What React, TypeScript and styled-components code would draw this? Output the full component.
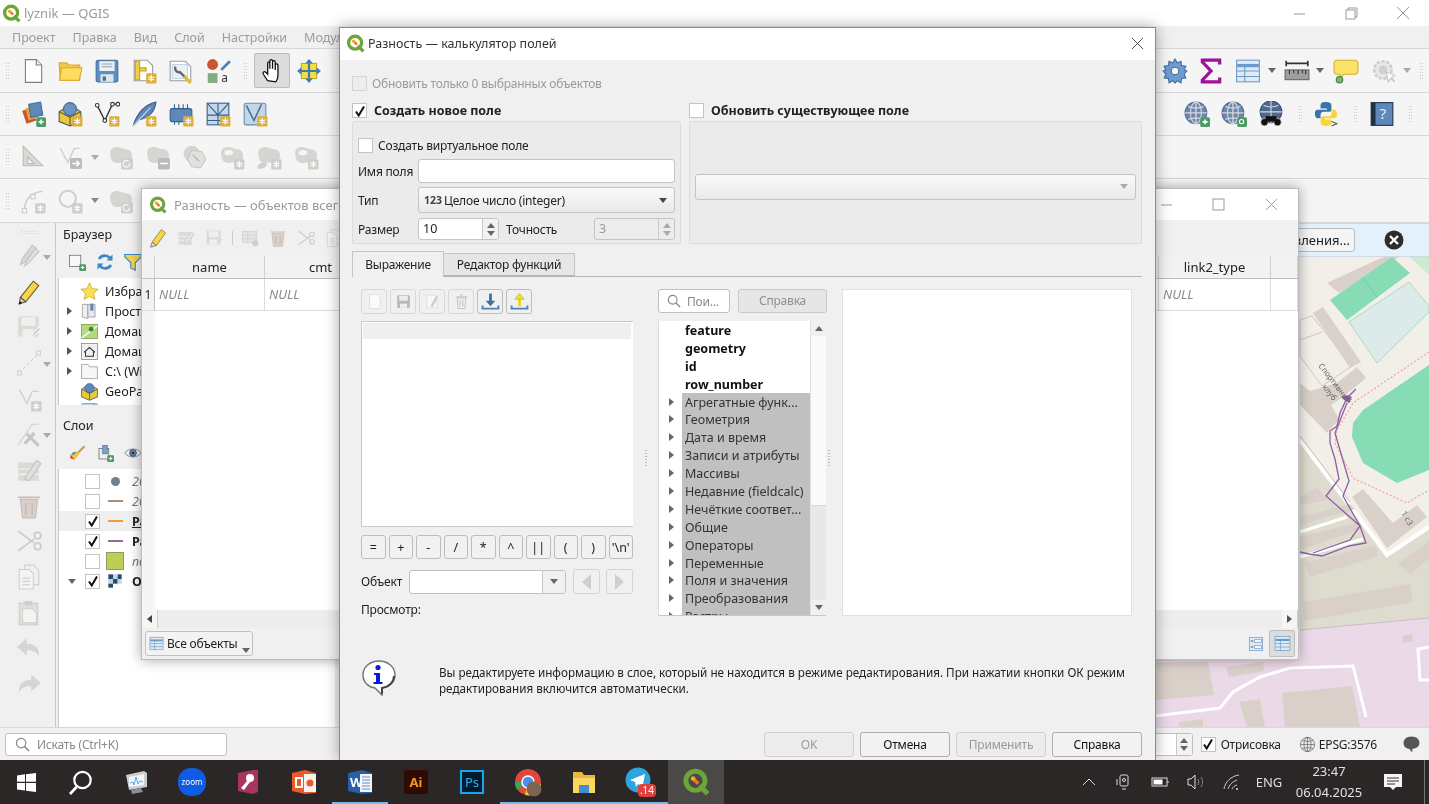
import React from "react";
import styled, { createGlobalStyle, css } from "styled-components";

const GlobalStyle = createGlobalStyle`
  html, body { margin: 0; padding: 0; overflow: hidden; background: #f0f0f0; }
  * { box-sizing: border-box; }
`;

const FONT = `"Noto Sans", "Open Sans", sans-serif`;

// the reference's regular labels run tighter than Noto Sans
const narrow = css`
  font-size: 12px;
  letter-spacing: -0.2px;
`;

/* ---------- icon drawings ---------- */

const IconSvg = styled.svg<{ $s?: number }>`
  width: ${(p) => p.$s || 26}px;
  height: ${(p) => p.$s || 26}px;
  flex: none;
  display: block;
`;

const Ico = ({ s, children }: { s?: number; children: React.ReactNode }) => (
  <IconSvg $s={s} viewBox="0 0 24 24" fill="none">
    {children}
  </IconSvg>
);

const Star = ({ x = 14, y = 14, off }: { x?: number; y?: number; off?: boolean }) => (
  <g>
    <rect x={x} y={y} width="9.5" height="9.5" rx="1" fill={off ? "#cfcdc8" : "#dcae3c"} />
    <path
      d={`M${x + 4.75} ${y + 1.8}v6M${x + 2.1} ${y + 3.3}l5.3 3M${x + 7.4} ${y + 3.3}l-5.3 3`}
      stroke="#fff"
      strokeWidth="1.2"
    />
  </g>
);

const Plus = ({ c = "#4d9a66" }: { c?: string }) => (
  <g>
    <rect x="15" y="15" width="9" height="9" rx="1.5" fill={c} />
    <path d="M19.5 17v4.5M17.2 19.3h4.6" stroke="#fff" strokeWidth="1.5" />
  </g>
);

const Blob = () => <path d="M2 8c0-4 4-6 8-5s5 2 8 2 5 4 4 8-5 4-8 4-5 1-8 0-4-5-4-9z" fill="#d5d5d2" />;

const QLogo = ({ s = 18 }: { s?: number }) => (
  <IconSvg $s={s} viewBox="0 0 24 24" fill="none">
    <circle cx="11.5" cy="11" r="8.2" stroke="#6da539" strokeWidth="4.2" />
    <path d="M15 15l7 7" stroke="#6da539" strokeWidth="4.2" />
    <path d="M9 8.5l5 5" stroke="#ee7913" strokeWidth="3" />
    <circle cx="9.5" cy="9" r="2" fill="#f6a723" />
  </IconSvg>
);

const icons: Record<string, React.ReactNode> = {
  doc: (
    <>
      <path d="M5 1.5h10l5 5v16H5z" fill="#fff" stroke="#7d7d7d" />
      <path d="M15 1.5v5h5" fill="#eee" stroke="#7d7d7d" />
    </>
  ),
  folder: (
    <>
      <path d="M2 4.5h7l2 2h10v14H3z" fill="#f2c94c" stroke="#d6a92e" />
      <path d="M4 9h19l-2.5 11.5H2.500z" fill="#ffdc5e" stroke="#d6a92e" />
    </>
  ),
  save: (
    <>
      <rect x="2" y="2" width="20" height="20" rx="2" fill="#5b8ec2" stroke="#3f6f9f" />
      <rect x="5" y="3" width="14" height="9" fill="#eef1f4" />
      <path d="M7 5.500h10M7 8h10" stroke="#8fa0b0" />
      <rect x="6" y="15" width="12" height="7" fill="#dfe5ea" />
      <rect x="8" y="17" width="3" height="4" fill="#4a6f94" />
    </>
  ),
  props: (
    <>
      <path d="M3 2h12l5 5v14H3z" fill="#fff" stroke="#9a9a9a" />
      <path d="M4 3h4v17H4zM8 9h6v3H8z" fill="#f2cd4c" stroke="#c99f2b" />
      <Star />
    </>
  ),
  wrench: (
    <>
      <path d="M2 3h14l5 5v13H2z" fill="#fff" stroke="#9a9a9a" />
      <rect x="4" y="6" width="14" height="13" fill="#eaf0f7" stroke="#c6d2e0" />
      <path d="M7 8a3.500 3.500 0 0 0 4 5l8 8" stroke="#666" strokeWidth="2.200" />
      <path d="M15 17l6 6" stroke="#e2b93b" strokeWidth="3" />
    </>
  ),
  style: (
    <>
      <circle cx="7" cy="6" r="5" fill="#c9562f" />
      <rect x="2.500" y="14" width="9" height="9" fill="#84ab7e" />
      <path d="M15 11l8-8" stroke="#4c7fb5" strokeWidth="2.500" />
      <text x="15" y="22" fontSize="11" fontFamily={FONT} fill="#333">
        a
      </text>
    </>
  ),
  hand: (
    <path
      d="M8 21l-4-6c-1-2 1-3 2-2l2 2V5c0-2 2-2 2 0v5-7c0-2 2.500-2 2.500 0v7-6c0-2 2.500-2 2.500 0v7-4c0-2 2.500-2 2.500 0v9c0 3-1 5-2 6z"
      fill="#fff"
      stroke="#111"
      strokeWidth="1.200"
    />
  ),
  pan: (
    <>
      <rect x="5" y="5" width="14" height="14" fill="#f4df3c" stroke="#bca92c" />
      <path d="M12 1l3.500 4h-7zM12 23l3.500-4h-7zM1 12l4-3.500v7zM23 12l-4-3.500v7z" fill="#3f7ab8" />
      <path d="M12 5v14M5 12h14" stroke="#3f7ab8" strokeWidth="2" />
    </>
  ),
  layers: (
    <>
      <path d="M2 9l9-3 4 12-9 3z" fill="#c9562f" />
      <path d="M5 7l9-3 3 11-9 3z" fill="#e9a33b" />
      <path d="M8 3l11-2 2 12-11 2z" fill="#5e88ba" stroke="#3f6f9f" />
      <Plus />
    </>
  ),
  box: (
    <>
      <path d="M2 10l10-6 10 6v9l-10 4-10-4z" fill="#e8c93a" stroke="#555" />
      <circle cx="12" cy="7.500" r="6" fill="#6b93c0" stroke="#3f6f9f" />
      <path d="M2 10l10 5 10-5" stroke="#555" />
      <path d="M12 15v8" stroke="#555" />
      <Star />
    </>
  ),
  vedit: (
    <>
      <path d="M3 4l7 14 7-15h5" stroke="#333" strokeWidth="1.300" />
      <circle cx="3" cy="4" r="1.700" fill="#fff" stroke="#333" />
      <circle cx="10" cy="18" r="1.700" fill="#fff" stroke="#333" />
      <circle cx="17" cy="3" r="1.700" fill="#fff" stroke="#333" />
      <circle cx="22" cy="3" r="1.700" fill="#fff" stroke="#333" />
      <Star />
    </>
  ),
  feather: (
    <>
      <path d="M2 23C5 13 11 4 23 1c-1 9-7 15-15 16z" fill="#5e88ba" stroke="#355f8c" />
      <path d="M2 23L18 6" stroke="#cfe0f0" />
      <Star />
    </>
  ),
  chip: (
    <>
      <rect x="2" y="7" width="20" height="12" rx="2" fill="#5e88ba" stroke="#355f8c" />
      <path d="M6 3v4M10 3v4M14 3v4M18 3v4M6 19v3M10 19v3" stroke="#355f8c" />
      <Star />
    </>
  ),
  grid: (
    <>
      <rect x="2" y="2" width="20" height="20" fill="#c4d7ea" stroke="#355f8c" />
      <path d="M2 13h20M12 13v9M2 2l10 11M12 13L22 2M12 2v11M2 18h20" stroke="#355f8c" />
      <Star />
    </>
  ),
  vbox: (
    <>
      <rect x="2" y="2" width="20" height="20" rx="2" fill="#c4d7ea" stroke="#6a8db0" />
      <path d="M4 4l7 14 7-15" stroke="#4f6f8f" strokeWidth="1.500" />
      <Star />
    </>
  ),
  triangle: (
    <>
      <path d="M3 2l18 18H3z" fill="#dcd9d5" stroke="#bdbab5" />
      <path d="M7 12l6 6H7z" fill="#f5f5f5" stroke="#bdbab5" />
    </>
  ),
  vmove: (
    <>
      <path d="M3 4l7 13 6-13h5" stroke="#d2d0cc" strokeWidth="1.300" />
      <rect x="12" y="13" width="11" height="10" rx="1.500" fill="#bdbbb7" />
      <path d="M14 18h6M18 15.500l2.500 2.500-2.500 2.500" stroke="#fff" strokeWidth="1.500" />
    </>
  ),
  blobRot: (
    <>
      <Blob />
      <rect x="12" y="13" width="11" height="10.500" rx="1.500" fill="#cfcfcc" />
      <path d="M20 18a3 3 0 1 1-1-2" stroke="#f2f2f2" strokeWidth="1.400" />
    </>
  ),
  blobMove: (
    <>
      <Blob />
      <rect x="12" y="13" width="11" height="10.500" rx="1.500" fill="#bdbbb7" />
      <path d="M14 18h7" stroke="#fff" strokeWidth="1.500" />
    </>
  ),
  hexa: (
    <>
      <circle cx="9" cy="9" r="7.500" fill="#d5d4d0" />
      <path d="M9 6l9 1 4 7-5 8-8-1-4-7z" fill="#e2e1dd" stroke="#c8c7c3" />
      <path d="M10 10l6 6" stroke="#aaa" />
    </>
  ),
  blobHole: (
    <>
      <Blob />
      <ellipse cx="9" cy="8" rx="4" ry="2.400" fill="#f5f5f5" />
      <Star off />
    </>
  ),
  blobPart: (
    <>
      <Blob />
      <path d="M1 21c2-4 6-5 9-3 0 3-3 5-8 5z" fill="#cfcfcb" />
      <Star off />
    </>
  ),
  arc: (
    <>
      <path d="M4 22C4 10 10 4 21 3" stroke="#d2d0cc" strokeWidth="1.500" />
      <rect x="2" y="19" width="4" height="4" fill="#f5f5f5" stroke="#ccc" />
      <rect x="10" y="6" width="4" height="4" fill="#f5f5f5" stroke="#ccc" />
      <Star off />
    </>
  ),
  ring: (
    <>
      <circle cx="10" cy="10" r="7.500" stroke="#d2d0cc" strokeWidth="2" />
      <Star off />
    </>
  ),
  gear: (
    <>
      <path
        d="M12 1l2 3.500 3.500-1.500.5 4 4 .5L20.500 11 23 12l-2.500 3 1.500 3.500-4 .5-.5 4L14 21l-2 2-2-2-3.500 2-.5-4-4-.5L3.500 15 1 12l2.500-1L2 7.500l4-.5.5-4L10 4.500z"
        fill="#6e9bd0"
        stroke="#3f6f9f"
      />
      <circle cx="12" cy="12" r="3.500" fill="#f5f5f5" stroke="#3f6f9f" />
    </>
  ),
  sigma: <path d="M20 6V2H4v1.500L12 12l-8 8.500V22h16v-4" stroke="#a0109a" strokeWidth="3" />,
  table: (
    <>
      <rect x="1.500" y="2" width="21" height="20" fill="#dfeaf5" stroke="#6a9ac9" />
      <path d="M2 7h20" stroke="#6a9ac9" strokeWidth="3" />
      <path d="M2 12h20M2 17h20M9 8v14" stroke="#6a9ac9" />
    </>
  ),
  ruler: (
    <>
      <path d="M2 5h20M2 2.500v5M22 2.500v5" stroke="#333" strokeWidth="1.500" />
      <rect x="1" y="11" width="22" height="9" fill="#a0a0a0" stroke="#666" />
      <path d="M5 11v4M9 11v3M13 11v4M17 11v3M20 11v4" stroke="#333" />
    </>
  ),
  tip: (
    <>
      <path
        d="M5 2h15a3 3 0 0 1 3 3v7a3 3 0 0 1-3 3H10l-3 3-1-3H4a3 3 0 0 1-3-3V5a3 3 0 0 1 4-3z"
        fill="#fbe36a"
        stroke="#cfae2f"
      />
      <circle cx="6" cy="20" r="3" fill="#7fb66f" stroke="#3f7f3f" />
    </>
  ),
  gearOff: (
    <>
      <circle cx="11" cy="11" r="8" fill="#e8e8e6" stroke="#cfcfcd" strokeWidth="2.500" strokeDasharray="3 1.500" />
      <circle cx="11" cy="11" r="4" fill="#cfcfcd" />
      <path d="M14 13l2 9 2-3 4 3-3-4 3-2z" fill="#fff" stroke="#c6c6c4" />
    </>
  ),
  globeAdd: (
    <>
      <circle cx="11" cy="11" r="10" fill="#6c88b0" stroke="#4f6f9a" />
      <path d="M1 11h20M11 1v20M4 5c4 2 10 2 14 0M4 17c4-2 10-2 14 0" stroke="#d8d8d8" strokeWidth="1.200" />
      <ellipse cx="11" cy="11" rx="5" ry="10" stroke="#d8d8d8" />
      <Plus />
    </>
  ),
  globeFind: (
    <>
      <circle cx="11" cy="11" r="10" fill="#6c88b0" stroke="#4f6f9a" />
      <path d="M1 11h20M11 1v20M4 5c4 2 10 2 14 0M4 17c4-2 10-2 14 0" stroke="#d8d8d8" strokeWidth="1.200" />
      <ellipse cx="11" cy="11" rx="5" ry="10" stroke="#d8d8d8" />
      <rect x="15" y="15" width="9" height="9" rx="1.500" fill="#4d9a66" />
      <circle cx="19" cy="19" r="2" stroke="#fff" />
    </>
  ),
  globeBin: (
    <>
      <circle cx="12" cy="10" r="10" fill="#4d6a8f" stroke="#3a5272" />
      <path d="M2 10h20M12 0v20M5 4c4 2 10 2 14 0" stroke="#d8d8d8" />
      <circle cx="6" cy="19.500" r="3.500" fill="#111" stroke="#fff" strokeWidth=".6" />
      <circle cx="18" cy="19.500" r="3.500" fill="#111" stroke="#fff" strokeWidth=".6" />
      <path d="M7 14h10v5H7z" fill="#111" />
    </>
  ),
  python: (
    <>
      <path d="M12 1c-5 0-5 2-5 4v2h6v1H4c-3 0-3 7 0 8h3v-3c0-2 1-3 3-3h5c1 0 2-1 2-2V4c0-2-2-3-5-3z" fill="#3873a9" />
      <path d="M12 23c5 0 5-2 5-4v-2h-6v-1h9c3 0 3-7 0-8h-3v3c0 2-1 3-3 3H9c-1 0-2 1-2 2v4c0 2 2 3 5 3z" fill="#fdd33c" />
      <path d="M17 19l5 2-5 2" stroke="#555" />
    </>
  ),
  help: (
    <>
      <rect x="2" y="1.500" width="20" height="21" fill="#5e88ba" stroke="#1f3146" />
      <rect x="2" y="1.500" width="4" height="21" fill="#1f3146" />
      <text x="10" y="17" fontSize="14" fontFamily={FONT} fill="#e8eef5">
        ?
      </text>
    </>
  ),
  pencilsOff: (
    <>
      <path d="M4 20l2-6L15 2l4 3L9 17z" fill="#d9d7d3" stroke="#c5c3bf" />
      <path d="M8 21l2-5L18 5l3 3-10 11z" fill="#e2e0dc" stroke="#c5c3bf" />
    </>
  ),
  pencil: (
    <>
      <path d="M4 17L16 2l5 4L9 21z" fill="#f5d54a" stroke="#6a5a20" />
      <path d="M4 17l5 4-6 2z" fill="#e9d6b5" stroke="#555" />
      <path d="M3 23l2-2" stroke="#111" strokeWidth="1.500" />
    </>
  ),
  saveOff: (
    <>
      <rect x="2" y="2" width="19" height="19" rx="2" fill="#dbdad7" />
      <rect x="5" y="3" width="13" height="8" fill="#f0efed" />
      <rect x="6" y="14" width="10" height="7" fill="#f0efed" />
      <path d="M14 22l2-5 5-5 2 2-5 5z" fill="#cfcdc9" stroke="#f5f5f5" />
    </>
  ),
  lineOff: (
    <>
      <path d="M3 21L21 3" stroke="#d2d0cc" strokeDasharray="3 2" />
      <rect x="1.500" y="19.500" width="3.500" height="3.500" fill="#f5f5f5" stroke="#d0d0d0" />
      <rect x="19" y="1" width="3.500" height="3.500" fill="#f5f5f5" stroke="#d0d0d0" />
    </>
  ),
  vOff: (
    <>
      <path d="M3 3l7 13 5-11h6" stroke="#d2d0cc" strokeWidth="1.300" />
      <Star off />
    </>
  ),
  toolsOff: (
    <>
      <path d="M2 22L15 3h6" stroke="#d2d0cc" />
      <path d="M10 12l11 11M17 11l-9 10" stroke="#c9c7c3" strokeWidth="3" />
    </>
  ),
  rowsOff: (
    <>
      <rect x="2" y="5" width="19" height="17" fill="#dbdad7" />
      <path d="M2 11h19M2 16h19" stroke="#f4f4f4" />
      <path d="M8 20L19 3l4 3-11 16z" fill="#e2e0dc" stroke="#c5c3bf" />
    </>
  ),
  trashOff: (
    <>
      <path d="M4 6h16l-2 17H6z" fill="#d9cfcb" stroke="#c7bcb7" />
      <path d="M2 4h20M9 9v11M15 9v11" stroke="#c7bcb7" strokeWidth="1.500" />
    </>
  ),
  scissorsOff: (
    <>
      <path d="M2 3l15 11M2 21L17 10" stroke="#cbcbc9" strokeWidth="1.500" />
      <circle cx="20" cy="7" r="3" stroke="#cbcbc9" strokeWidth="1.500" />
      <circle cx="20" cy="17" r="3" stroke="#cbcbc9" strokeWidth="1.500" />
    </>
  ),
  copyOff: (
    <>
      <path d="M8 1h8l5 5v13H8z" fill="#f0f0ee" stroke="#d0d0ce" />
      <path d="M3 5h9l4 4v14H3z" fill="#f4f4f2" stroke="#d0d0ce" />
      <path d="M6 13h7M6 16h7M6 19h7" stroke="#d0d0ce" />
    </>
  ),
  pasteOff: (
    <>
      <rect x="3" y="3" width="17" height="20" fill="#e0dfdc" stroke="#cfcecb" />
      <rect x="8" y="1" width="7" height="4" fill="#cfcecb" />
      <path d="M6 8h9l4 4v9H6z" fill="#f4f4f2" stroke="#d0d0ce" />
    </>
  ),
  undoOff: <path d="M10 3L1 11l9 8v-5c5 0 9 1 11 6 1-7-3-12-11-12z" fill="#d6d5d2" />,
  redoOff: <path d="M14 3l9 8-9 8v-5C9 14 5 15 3 20 2 13 6 8 14 8z" fill="#d6d5d2" />,
  addGroup: (
    <>
      <rect x="2" y="3" width="15" height="15" fill="#f8f8f8" stroke="#666" />
      <Plus />
    </>
  ),
  refresh: (
    <>
      <path d="M20 9A9 9 0 0 0 4 8" stroke="#3d86c6" strokeWidth="3.500" />
      <path d="M4 15a9 9 0 0 0 16 1" stroke="#3d86c6" strokeWidth="3.500" />
      <path d="M22 2v8h-8zM2 22v-8h8z" fill="#3d86c6" />
    </>
  ),
  filter: <path d="M1 2h22v3l-8 8v10l-6-3v-7L1 5z" fill="#f3d34a" stroke="#3d86c6" strokeWidth="1.500" />,
  star: <path d="M12 1l3.300 7.400 7.700.7-5.900 5 1.800 7.900L12 18l-6.900 4 1.800-7.900-5.900-5 7.700-.7z" fill="#fbe04e" stroke="#c9a93a" />,
  project: (
    <>
      <path d="M3 3h7v18l-7-2z" fill="#eee" stroke="#999" />
      <path d="M10 3h9v16H10z" fill="#e8e8e8" stroke="#999" />
      <path d="M13 2h4v9h-4z" fill="#5e88ba" />
    </>
  ),
  home1: (
    <>
      <rect x="2" y="3" width="20" height="18" fill="#b5d97e" stroke="#7a9a55" />
      <path d="M2 20L22 5" stroke="#f5f5f5" strokeWidth="2" />
      <circle cx="14" cy="9" r="3" fill="#2e8b3a" />
    </>
  ),
  home2: (
    <>
      <rect x="2" y="2" width="20" height="20" fill="#f0f0f0" stroke="#888" />
      <path d="M5 13l7-6 7 6M7 12v6h10v-6" stroke="#333" strokeWidth="1.300" />
    </>
  ),
  driveFolder: <path d="M2 21V3h8l2 3h10v15z" fill="#f6f6f6" stroke="#999" />,
  geopackage: (
    <>
      <path d="M2 9l10-6 10 6v10l-10 4-10-4z" fill="#e8c93a" stroke="#555" />
      <circle cx="12" cy="8" r="6" fill="#5e88ba" stroke="#3f6f9f" />
      <path d="M2 9l10 5 10-5M12 14v9" stroke="#555" />
    </>
  ),
  brush: (
    <>
      <path d="M13 12l9-9" stroke="#caa255" strokeWidth="3" />
      <path d="M3 14l9-4 3 4-6 7z" fill="#e8c93a" />
      <path d="M3 14l6 7-6-2z" fill="#d43f3f" />
      <path d="M5 12l5-2 1 2-5 3z" fill="#5e88ba" />
    </>
  ),
  layerAdd: (
    <>
      <rect x="4" y="6" width="13" height="14" fill="#eee" stroke="#666" />
      <rect x="9" y="2" width="6" height="11" fill="#7ea4cc" stroke="#4f6f9a" />
      <Plus />
    </>
  ),
  eye: (
    <>
      <path d="M1 12c5-7 17-7 22 0-5 7-17 7-22 0z" fill="#f2f2f2" stroke="#666" />
      <circle cx="12" cy="12" r="4.500" fill="#5e88ba" stroke="#333" />
      <circle cx="12" cy="12" r="1.500" fill="#111" />
    </>
  ),
  checker: (
    <>
      <rect x="2" y="2" width="7" height="7" fill="#2c4a68" />
      <rect x="9" y="2" width="7" height="7" fill="#bcd3e8" />
      <rect x="16" y="2" width="6" height="7" fill="#2c4a68" />
      <rect x="9" y="9" width="7" height="7" fill="#2c4a68" />
      <rect x="2" y="9" width="7" height="7" fill="#bcd3e8" />
      <rect x="2" y="16" width="7" height="6" fill="#2c4a68" />
      <rect x="16" y="9" width="6" height="7" fill="#bcd3e8" />
    </>
  ),
  editOn: (
    <>
      <path d="M5 17L16 2l5 4L10 21z" fill="#f5d54a" stroke="#8a7a30" />
      <path d="M5 17l5 4-7 2z" fill="#e9d6b5" stroke="#777" />
    </>
  ),
  formEdit: (
    <>
      <rect x="2" y="4" width="18" height="17" fill="#dedcd8" />
      <path d="M2 10h18M2 15h18" stroke="#f4f4f4" />
      <path d="M9 19L19 4l4 3-11 14z" fill="#e8e6e2" stroke="#c8c6c2" />
    </>
  ),
  addRow: (
    <>
      <rect x="2" y="3" width="19" height="15" fill="#e6e5e2" stroke="#cfcecb" />
      <path d="M2 8h19M2 13h19M9 3v15" stroke="#cfcecb" />
      <circle cx="19" cy="19" r="4" fill="#cfcecb" />
    </>
  ),
  viewForm: (
    <>
      <rect x="2" y="2" width="20" height="20" fill="#dfeaf5" stroke="#6a9ac9" />
      <rect x="10" y="5" width="10" height="5" fill="#f7f7f7" stroke="#6a9ac9" />
      <rect x="10" y="14" width="10" height="5" fill="#f7f7f7" stroke="#6a9ac9" />
      <path d="M4 7.500h4M4 16.500h4" stroke="#555" strokeWidth="1.500" />
    </>
  ),
  docFaint: <path d="M5 2h10l5 5v15H5z" fill="#fbfbfb" stroke="#d8d8d8" />,
  saveFaint: (
    <>
      <rect x="3" y="3" width="18" height="18" rx="2" fill="#b8b8b8" />
      <rect x="6" y="4" width="12" height="7" fill="#ededed" />
      <rect x="7" y="15" width="10" height="6" fill="#ededed" />
    </>
  ),
  editFaint: (
    <>
      <path d="M4 3h14v18H4z" fill="#f8f8f8" stroke="#dadada" />
      <path d="M9 18L17 4l3 2-8 14z" fill="#cfcfcf" />
    </>
  ),
  trashFaint: (
    <>
      <path d="M6 7h12l-1 15H7z" stroke="#c7b8b4" strokeWidth="1.300" />
      <path d="M4 5.500h16M10 3h4M10 10v9M14 10v9" stroke="#c7b8b4" strokeWidth="1.300" />
    </>
  ),
  download: (
    <>
      <path d="M12 2v11" stroke="#3f6f9f" strokeWidth="3.500" />
      <path d="M6 11h12l-6 7z" fill="#3f6f9f" />
      <path d="M2 17v4h20v-4" stroke="#4f81b5" strokeWidth="2.500" />
    </>
  ),
  upload: (
    <>
      <path d="M12 18V8" stroke="#e7d612" strokeWidth="3.500" />
      <path d="M6 9h12l-6-7z" fill="#f2e22a" stroke="#a89a10" strokeWidth=".6" />
      <path d="M2 17v4h20v-4" stroke="#4f81b5" strokeWidth="2.500" />
    </>
  ),
  bubble: (
    <path d="M12 2C6 2 2 5.500 2 10s3 7 7 7.500L13 22v-4.500c5-.5 9-3 9-7.500s-4-8-10-8z" fill="#555" />
  ),
  epsg: (
    <>
      <circle cx="12" cy="12" r="10" fill="#e9e9e9" stroke="#666" />
      <path d="M2 12h20M12 2v20M4 6c4 2 12 2 16 0M4 18c4-2 12-2 16 0" stroke="#666" />
      <ellipse cx="12" cy="12" rx="5" ry="10" stroke="#666" />
    </>
  ),
};

const Icon = ({ n, s }: { n: string; s?: number }) => <Ico s={s}>{icons[n]}</Ico>;

/* ---------- page frame ---------- */

const Desktop = styled.div`
  position: relative;
  width: 1429px;
  height: 804px;
  overflow: hidden;
  display: flex;
  flex-direction: column;
  background: #f0f0f0;
  font-family: ${FONT};
  font-size: 12.5px;
  color: #222;
  filter: blur(0.45px);
`;

const TitleBar = styled.div`
  height: 26px;
  flex: none;
  background: #fff;
  display: flex;
  align-items: center;
  padding-left: 2px;
  gap: 3px;
  color: #9a9a9a;
  font-size: 13px;
`;

const WinButtons = styled.div`
  margin-left: auto;
  display: flex;
  align-items: center;
`;

const WinBtn = styled.div<{ $w?: number }>`
  width: ${(p) => p.$w || 52}px;
  display: flex;
  justify-content: center;
`;

const MenuBar = styled.div`
  height: 22px;
  flex: none;
  background: #f0f0f0;
  display: flex;
  align-items: center;
  padding-left: 12px;
  gap: 17px;
  color: #9c9c9c;
  font-size: 12.5px;
`;

const ToolRow = styled.div<{ $h: number }>`
  height: ${(p) => p.$h}px;
  flex: none;
  background: #f5f5f5;
  border-top: 1px solid #d8d8d8;
  display: flex;
  align-items: center;
  justify-content: space-between;
  overflow: hidden;
`;

const ToolGroup = styled.div`
  display: flex;
  align-items: center;
`;

const Grip = styled.div<{ $mx?: number }>`
  width: 4px;
  height: 18px;
  flex: none;
  margin: 0 ${(p) => p.$mx ?? 5}px;
  background-image: radial-gradient(circle, #bbb 0.7px, transparent 0.8px);
  background-size: 2.5px 3px;
`;

const Tool = styled.div<{ $w?: number; $on?: boolean }>`
  width: ${(p) => p.$w || 37}px;
  height: 35px;
  flex: none;
  display: flex;
  align-items: center;
  justify-content: center;
  border-radius: 2px;
  background: ${(p) => (p.$on ? "#dcdcdc" : "transparent")};
  border: ${(p) => (p.$on ? "1px solid #bdbdbd" : "none")};
`;

const Caret = styled.i<{ $c?: string; $mx?: number }>`
  display: block;
  width: 0;
  height: 0;
  flex: none;
  margin: 0 ${(p) => p.$mx ?? 0}px;
  border-left: 4.5px solid transparent;
  border-right: 4.5px solid transparent;
  border-top: 5px solid ${(p) => p.$c || "#666"};
`;

const Body = styled.div`
  flex: 1;
  min-height: 0;
  display: flex;
  border-top: 1px solid #d8d8d8;
`;

const Rail = styled.div`
  width: 56px;
  flex: none;
  padding: 2px 0 0 2px;
  border-right: 1px solid #c8c8c8;
  display: flex;
  flex-direction: column;
  align-items: center;
`;

const RailGrip = styled.div`
  width: 18px;
  height: 4px;
  flex: none;
  margin: 5px 0 4px;
  background-image: radial-gradient(circle, #bbb 0.7px, transparent 0.8px);
  background-size: 3px 2.5px;
`;

const RailSlot = styled.div`
  height: 35.7px;
  flex: none;
  display: flex;
  align-items: center;
  justify-content: center;
  position: relative;
  width: 100%;
`;

const RailCaret = styled.span`
  position: absolute;
  right: 4px;
  top: 17px;
  display: block;
`;

const Docks = styled.div`
  width: 279px;
  flex: none;
  display: flex;
  flex-direction: column;
`;

const DockTitle = styled.div<{ $mt?: number }>`
  height: 22px;
  flex: none;
  margin-top: ${(p) => p.$mt ?? 0}px;
  display: flex;
  align-items: center;
  padding-left: 7px;
  font-size: 12.5px;
`;

const DockTools = styled.div`
  height: 33px;
  flex: none;
  display: flex;
  align-items: center;
  padding-left: 12px;
  gap: 10px;
`;

const TreeBox = styled.div<{ $h?: number }>`
  height: ${(p) => (p.$h ? `${p.$h}px` : "auto")};
  flex: ${(p) => (p.$h ? "none" : "1")};
  margin-left: 2px;
  background: #fff;
  border-left: 1px solid #c8c8c8;
  overflow: hidden;
  padding-top: ${(p) => (p.$h ? 3 : 2)}px;
`;

const TreeRow = styled.div<{ $sel?: boolean }>`
  height: 20px;
  display: flex;
  align-items: center;
  white-space: nowrap;
  font-size: 12.5px;
  background: ${(p) => (p.$sel ? "#efefef" : "transparent")};
`;

const Arrow = styled.div<{ $w: number }>`
  width: ${(p) => p.$w}px;
  flex: none;
  display: flex;
  justify-content: center;
`;

const RightTri = styled.i<{ $c?: string; $big?: boolean }>`
  display: block;
  width: 0;
  height: 0;
  border-top: ${(p) => (p.$big ? 8 : 4.5)}px solid transparent;
  border-bottom: ${(p) => (p.$big ? 8 : 4.5)}px solid transparent;
  border-left: ${(p) => (p.$big ? 9 : 5)}px solid ${(p) => p.$c || "#555"};
`;

const LeftTri = styled.i<{ $c?: string; $big?: boolean }>`
  display: block;
  width: 0;
  height: 0;
  border-top: ${(p) => (p.$big ? 8 : 4.5)}px solid transparent;
  border-bottom: ${(p) => (p.$big ? 8 : 4.5)}px solid transparent;
  border-right: ${(p) => (p.$big ? 9 : 5)}px solid ${(p) => p.$c || "#444"};
`;

const TreeLabel = styled.span<{ $b?: boolean; $i?: boolean; $u?: boolean; $gray?: boolean; $ml?: number }>`
  margin-left: ${(p) => p.$ml ?? 5}px;
  font-weight: ${(p) => (p.$b ? 700 : 400)};
  font-style: ${(p) => (p.$i ? "italic" : "normal")};
  text-decoration: ${(p) => (p.$u ? "underline" : "none")};
  color: ${(p) => (p.$gray ? "#777" : "#222")};
`;

// browser names stop where the attribute table window starts
const BrowserLabel = styled.span`
  margin-left: 6px;
  max-width: 36px;
  overflow: hidden;
`;

const Check = styled.div<{ $off?: boolean; $s?: number }>`
  width: ${(p) => p.$s || 15}px;
  height: ${(p) => p.$s || 15}px;
  flex: none;
  background: ${(p) => (p.$off ? "#ededed" : "#fff")};
  border: 1px solid ${(p) => (p.$off ? "#d4d4d4" : "#c4c4c4")};
  display: flex;
  align-items: center;
  justify-content: center;
`;

const Tick = () => (
  <IconSvg $s={12} viewBox="0 0 12 12" fill="none">
    <path d="M2 6.500L4.700 10.500 10 1.500" stroke="#111" strokeWidth="2" />
  </IconSvg>
);

const LayerSym = styled.div`
  width: 20px;
  margin-left: 5px;
  flex: none;
  display: flex;
  justify-content: center;
`;

const SymLine = styled.i<{ $c: string }>`
  width: 15px;
  height: 1.500px;
  background: ${(p) => p.$c};
`;

const SymDot = styled.i`
  width: 9px;
  height: 9px;
  border-radius: 50%;
  background: #738089;
`;

const SymFill = styled.i`
  width: 18px;
  height: 18px;
  background: #bccf55;
  border: 1px solid #8a9a60;
`;

const MapColumn = styled.div`
  flex: 1;
  min-width: 0;
  display: flex;
  flex-direction: column;
`;

const MessageBar = styled.div`
  height: 34px;
  flex: none;
  background: #e4f1fb;
  border-top: 1px solid #cfd9e2;
  border-bottom: 1px solid #cfd9e2;
  display: flex;
  align-items: center;
  justify-content: flex-end;
  padding-right: 25px;
  gap: 29px;
`;

const MessageBtn = styled.div`
  height: 24px;
  padding: 0 4px;
  width: 150px;
  text-align: right;
  background: #f4f4f4;
  border: 1px solid #bcbcbc;
  border-radius: 3px;
  font-size: 13px;
  line-height: 22px;
  white-space: nowrap;
`;

const MapSvg = styled.svg`
  flex: 1;
  min-height: 0;
  width: 100%;
  display: block;
`;

const StatusBar = styled.div`
  height: 33px;
  flex: none;
  display: flex;
  align-items: center;
  justify-content: space-between;
  padding: 0 8px 0 5px;
  border-top: 1px solid #d8d8d8;
  background: #f0f0f0;
`;

const SearchBox = styled.div`
  width: 222px;
  height: 23px;
  background: #fff;
  border: 1px solid #c0c0c0;
  border-radius: 3px;
  display: flex;
  align-items: center;
  padding-left: 9px;
  gap: 7px;
  color: #8a8a8a;
  ${narrow}
`;

const StatusRight = styled.div`
  display: flex;
  align-items: center;
  ${narrow}
`;

const ScaleSpin = styled.div`
  width: 60px;
  height: 23px;
  display: flex;
  justify-content: flex-end;
  border: 1px solid #c0c0c0;
  border-radius: 3px;
  background: #fff;
  margin-right: 8px;
`;

const SpinArrows = styled.div<{ $off?: boolean; $w?: number }>`
  width: ${(p) => p.$w || 16}px;
  flex: none;
  background: ${(p) => (p.$off ? "#ececec" : "#f2f2f2")};
  border-left: 1px solid #c8c8c8;
  display: flex;
  flex-direction: column;
  align-items: center;
  justify-content: center;
  gap: 3px;
`;

const Up = styled.i<{ $off?: boolean }>`
  width: 0;
  height: 0;
  border-left: 4.500px solid transparent;
  border-right: 4.500px solid transparent;
  border-bottom: 5px solid ${(p) => (p.$off ? "#aaa" : "#666")};
`;

const Down = styled(Caret)``;

const StatusText = styled.span<{ $ml: number }>`
  margin-left: ${(p) => p.$ml}px;
  white-space: nowrap;
`;

const StatusIcon = styled.span<{ $ml: number }>`
  margin-left: ${(p) => p.$ml}px;
  display: block;
`;

/* ---------- taskbar ---------- */

const Taskbar = styled.div`
  height: 44px;
  flex: none;
  background: #2a2726;
  display: flex;
  align-items: center;
  color: #e8e8e8;
  position: relative;
  z-index: 5;
`;

const TaskSlot = styled.div<{ $w?: number; $open?: boolean; $active?: boolean }>`
  width: ${(p) => p.$w || 56}px;
  height: 44px;
  flex: none;
  display: flex;
  align-items: center;
  justify-content: center;
  background: ${(p) => (p.$active ? "#4b4947" : "transparent")};
  box-shadow: ${(p) => (p.$open ? "inset 0 -2px 0 #76b9ed" : "none")};
`;

const TrayGroup = styled.div`
  margin-left: auto;
  display: flex;
  align-items: center;
`;

const Clock = styled.div`
  width: 82px;
  text-align: center;
  font-size: 13px;
  line-height: 21px;
  color: #e0e0e0;
`;

const ShowDesktop = styled.div`
  width: 13px;
  height: 44px;
  margin-left: 0;
  border-left: 1px solid #777;
  transform: translateX(8px);
`;

const TrayEng = styled.span`
  font-size: 13px;
  color: #dedede;
`;

/* ---------- attribute table window ---------- */

const AttrWindow = styled.div`
  position: absolute;
  left: 141px;
  top: 188px;
  width: 1158px;
  height: 472px;
  background: #fff;
  border: 1px solid #bdbdbd;
  box-shadow: 0 0 12px rgba(0, 0, 0, 0.35);
  display: flex;
  flex-direction: column;
  z-index: 2;
`;

const AttrTitle = styled.div`
  height: 31px;
  flex: none;
  background: #fff;
  display: flex;
  align-items: center;
  padding-left: 7px;
  gap: 7px;
  color: #9a9a9a;
  font-size: 13px;
`;

const AttrTools = styled.div`
  height: 36px;
  flex: none;
  background: #f0f0f0;
  display: flex;
  align-items: center;
  padding-left: 2px;
`;

const AttrTool = styled.div`
  width: 28px;
  display: flex;
  justify-content: center;
`;

const VSep = styled.i`
  width: 1px;
  height: 14px;
  background: #ccc;
  margin: 0 3px 0 4px;
`;

const HeaderRow = styled.div`
  height: 23px;
  flex: none;
  display: flex;
  background: #f2f2f2;
  border-bottom: 1px solid #bfbfbf;
  font-size: 13px;
`;

const HeadCell = styled.div<{ $w?: number }>`
  width: ${(p) => (p.$w ? `${p.$w}px` : "auto")};
  flex: ${(p) => (p.$w ? "none" : "1")};
  border-right: 1px solid #d0d0d0;
  text-align: center;
  line-height: 23px;
`;

const DataRow = styled.div`
  height: 32px;
  flex: none;
  display: flex;
  border-bottom: 1px solid #dcdcdc;
  font-size: 13px;
  font-style: italic;
  color: #8a8a8a;
`;

const DataCell = styled.div<{ $w?: number }>`
  width: ${(p) => (p.$w ? `${p.$w}px` : "auto")};
  flex: ${(p) => (p.$w ? "none" : "1")};
  border-right: 1px solid #dcdcdc;
  padding-left: 4px;
  line-height: 31px;
`;

const RowHead = styled.div`
  width: 13px;
  flex: none;
  background: #f2f2f2;
  border-right: 1px solid #bfbfbf;
  text-align: center;
  line-height: 31px;
  font-style: normal;
  color: #333;
`;

const EmptyArea = styled.div`
  flex: 1;
  min-height: 0;
  display: flex;
`;

const Gutter = styled.div`
  width: 13px;
  background: #f5f5f5;
`;

const HScroll = styled.div`
  height: 18px;
  flex: none;
  background: #ededed;
  display: flex;
  align-items: center;
  justify-content: space-between;
`;

const ScrollBtn = styled.div`
  width: 16px;
  height: 18px;
  background: #f5f5f5;
  border-right: 1px solid #cfcfcf;
  display: flex;
  align-items: center;
  justify-content: center;
`;

const AttrFooter = styled.div`
  height: 31px;
  flex: none;
  background: #f0f0f0;
  display: flex;
  align-items: center;
  justify-content: space-between;
  padding: 0 3px;
`;

const AllButton = styled.div`
  width: 108px;
  height: 25px;
  background: #f3f3f3;
  border: 1px solid #c0c0c0;
  border-radius: 3px;
  display: flex;
  align-items: center;
  padding-left: 3px;
  gap: 3px;
  position: relative;
  ${narrow}
`;

const AllCaret = styled.span`
  position: absolute;
  right: 2px;
  bottom: 2px;
  display: block;
`;

const ViewToggle = styled.div<{ $on?: boolean }>`
  width: 26px;
  height: 27px;
  display: flex;
  align-items: center;
  justify-content: center;
  background: ${(p) => (p.$on ? "#dcdcdc" : "transparent")};
  border: ${(p) => (p.$on ? "1px solid #bdbdbd" : "none")};
  border-radius: 2px;
`;

/* ---------- field calculator dialog ---------- */

const Dialog = styled.div`
  position: absolute;
  left: 339px;
  top: 27px;
  width: 817px;
  height: 733px;
  background: #f0f0f0;
  border: 1px solid #8c8c8c;
  border-bottom: none;
  box-shadow: 0 0 14px rgba(0, 0, 0, 0.35);
  display: flex;
  flex-direction: column;
  z-index: 3;
`;

const DialogTitle = styled.div`
  height: 32px;
  flex: none;
  background: #fff;
  display: flex;
  align-items: center;
  padding: 0 0 2px 6px;
  gap: 3px;
  font-size: 12.500px;
  color: #333;
`;

const CloseX = styled.div`
  margin-left: auto;
  margin-right: 11px;
  display: flex;
`;

const CheckLine = styled.div<{ $mt?: number; $ml?: number }>`
  display: flex;
  align-items: center;
  gap: 6px;
  margin-top: ${(p) => p.$mt ?? 0}px;
  margin-left: ${(p) => p.$ml ?? 0}px;
  height: 15px;
  white-space: nowrap;
`;

const CheckText = styled.span<{ $b?: boolean; $off?: boolean }>`
  font-weight: ${(p) => (p.$b ? 700 : 400)};
  margin-left: ${(p) => (p.$b ? 1 : -1)}px;
  color: ${(p) => (p.$off ? "#9b9b9b" : "#222")};
  ${(p) => (p.$b ? "font-size: 12.5px;" : narrow)}
`;

const TopPart = styled.div`
  padding: 16px 13px 0 12px;
  flex: none;
`;

const ChoiceGrid = styled.div`
  display: grid;
  grid-template-columns: 329px 453px;
  column-gap: 8px;
`;

const GroupHead = styled.div`
  height: 30px;
  display: flex;
  align-items: flex-start;
`;

const GroupBox = styled.div`
  height: 123px;
  background: #ebebeb;
  border: 1px solid #dcdcdc;
  border-radius: 2px;
  padding: 16px 5px 0 5px;
  display: flex;
  flex-direction: column;
`;

const GroupBoxRight = styled(GroupBox)`
  justify-content: center;
  padding: 8px 5px 0 5px;
`;

const FieldRow = styled.div<{ $mt: number }>`
  display: flex;
  align-items: center;
  margin-top: ${(p) => p.$mt}px;
`;

const FieldLabel = styled.span<{ $w?: number; $pl?: number }>`
  width: ${(p) => p.$w || 60}px;
  padding-left: ${(p) => p.$pl ?? 0}px;
  flex: none;
  ${narrow}
`;

const TextInput = styled.div`
  width: 257px;
  height: 24px;
  background: #fff;
  border: 1px solid #c4c4c4;
  border-radius: 3px;
`;

const Combo = styled.div<{ $w?: number; $flat?: boolean; $h?: number }>`
  width: ${(p) => (p.$w ? `${p.$w}px` : "100%")};
  height: ${(p) => p.$h || 26}px;
  border: 1px solid #c4c4c4;
  border-radius: 3px;
  background: linear-gradient(#fafafa, #e9e9e9);
  display: flex;
  align-items: center;
  padding: 0 7px 0 5px;
  justify-content: space-between;
  ${narrow}
`;

const Code123 = styled.b`
  font-size: 10.5px;
  letter-spacing: 0;
  color: #444;
  margin-right: 2px;
`;

const ComboText = styled.span`
  display: flex;
  align-items: center;
`;

const SpinBox = styled.div<{ $off?: boolean }>`
  width: 81px;
  height: 22px;
  flex: none;
  display: flex;
  border: 1px solid #c4c4c4;
  border-radius: 3px;
  background: ${(p) => (p.$off ? "#ececec" : "#fff")};
  color: ${(p) => (p.$off ? "#999" : "#222")};
  overflow: hidden;
`;

const SpinValue = styled.div`
  flex: 1;
  padding-left: 4px;
  line-height: 20px;
`;

const TabBar = styled.div`
  margin: 7px 13px 0 12px;
  height: 26px;
  flex: none;
  border-bottom: 1px solid #b5b5b5;
  display: flex;
  align-items: flex-end;
`;

const Tab = styled.div<{ $on?: boolean; $w: number }>`
  width: ${(p) => p.$w}px;
  height: ${(p) => (p.$on ? 26 : 23)}px;
  margin-bottom: ${(p) => (p.$on ? -1 : 0)}px;
  border: 1px solid #c4c4c4;
  border-bottom: ${(p) => (p.$on ? "none" : "1px solid #b5b5b5")};
  border-left-width: ${(p) => (p.$on ? 1 : 0)}px;
  background: ${(p) => (p.$on ? "#f0f0f0" : "#e6e6e6")};
  display: flex;
  align-items: center;
  justify-content: center;
  ${narrow}
`;

const Workspace = styled.div`
  display: flex;
  flex: none;
  padding: 12px 0 0 21px;
  height: 339px;
`;

const LeftPane = styled.div`
  width: 272px;
  flex: none;
  display: flex;
  flex-direction: column;
`;

const Splitter = styled.div<{ $w: number; $pl?: number }>`
  width: ${(p) => p.$w}px;
  padding-left: ${(p) => p.$pl ?? 0}px;
  flex: none;
  display: flex;
  align-items: center;
  justify-content: ${(p) => (p.$pl ? "flex-start" : "center")};
`;

const SplitDots = styled.i`
  width: 2px;
  height: 18px;
  margin-top: 10px;
  background-image: radial-gradient(circle, #bbb 0.7px, transparent 0.8px);
  background-size: 2px 3px;
`;

const IconBtns = styled.div`
  height: 25px;
  flex: none;
  display: flex;
  gap: 3px;
`;

const IconBtn = styled.div<{ $off?: boolean }>`
  width: 26px;
  height: 25px;
  border: 1px solid ${(p) => (p.$off ? "#d8d8d8" : "#bdbdbd")};
  border-radius: 3px;
  background: #f0f0f0;
  display: flex;
  align-items: center;
  justify-content: center;
`;

const Editor = styled.div`
  height: 206px;
  flex: none;
  margin-top: 7px;
  background: #fff;
  border: 1px solid #c8c8c8;
  border-right: none;
  padding: 1px 2px 0 1px;
`;

const CurrentLine = styled.div`
  height: 16px;
  background: #efefef;
`;

const OpRow = styled.div`
  height: 24px;
  flex: none;
  margin-top: 8px;
  display: grid;
  grid-template-columns: repeat(10, 1fr);
  column-gap: 3px;
`;

const OpBtn = styled.div`
  border: 1px solid #bdbdbd;
  border-radius: 3px;
  background: #f1f1f1;
  display: flex;
  align-items: center;
  justify-content: center;
  font-size: 12.5px;
  color: #222;
`;

const ObjectRow = styled.div`
  height: 25px;
  flex: none;
  margin-top: 10px;
  display: flex;
  align-items: center;
`;

const ObjectLabel = styled.span`
  width: 48px;
  flex: none;
  ${narrow}
`;

const ObjectCombo = styled.div`
  width: 157px;
  height: 24px;
  background: #fff;
  border: 1px solid #c0c0c0;
  border-radius: 3px;
  display: flex;
  justify-content: flex-end;
  overflow: hidden;
`;

const ObjectDrop = styled.div`
  width: 23px;
  background: #f0f0f0;
  border-left: 1px solid #c8c8c8;
  display: flex;
  align-items: center;
  justify-content: center;
`;

const NavBtn = styled.div<{ $ml: number }>`
  width: 27px;
  height: 25px;
  margin-left: ${(p) => p.$ml}px;
  border: 1px solid #d4d4d4;
  border-radius: 3px;
  display: flex;
  align-items: center;
  justify-content: center;
`;

const PreviewLabel = styled.div`
  margin-top: 8px;
  line-height: 16px;
  ${narrow}
`;

const MiddlePane = styled.div`
  width: 168px;
  flex: none;
  display: flex;
  flex-direction: column;
`;

const SearchRow = styled.div`
  height: 24px;
  width: 169px;
  flex: none;
  display: flex;
  justify-content: space-between;
`;

const MiniSearch = styled.div`
  width: 72px;
  background: #fff;
  border: 1px solid #c0c0c0;
  border-radius: 3px;
  display: flex;
  align-items: center;
  padding-left: 8px;
  gap: 6px;
  color: #8a8a8a;
  ${narrow}
`;

const HelpBtn = styled.div`
  width: 89px;
  border: 1px solid #c8c8c8;
  border-radius: 3px;
  background: #e6e6e6;
  color: #8f8f8f;
  text-align: center;
  line-height: 22px;
  ${narrow}
`;

const FuncTree = styled.div`
  height: 295px;
  flex: none;
  margin-top: 8px;
  background: #fff;
  border-bottom: 1px solid #c8c8c8;
  border-left: 1px solid #dcdcdc;
  display: flex;
  overflow: hidden;
`;

const FuncList = styled.div`
  flex: 1;
  min-width: 0;
  overflow: hidden;
`;

const FuncRow = styled.div`
  height: 17.9px;
  display: flex;
  align-items: center;
  white-space: nowrap;
`;

const FuncArrow = styled.div`
  width: 23px;
  flex: none;
  display: flex;
  justify-content: center;
  transform: translateX(1px);
`;

const FuncName = styled.div<{ $group?: boolean }>`
  flex: 1;
  min-width: 0;
  height: 100%;
  padding-left: 3px;
  line-height: 19px;
  font-weight: ${(p) => (p.$group ? 400 : 700)};
  color: ${(p) => (p.$group ? "#333" : "#111")};
  background: ${(p) => (p.$group ? "#c0c0c0" : "#fff")};
  overflow: hidden;
`;

const VScroll = styled.div`
  width: 16px;
  flex: none;
  display: flex;
  flex-direction: column;
  background: #e8e8e8;
  border-left: 1px solid #e0e0e0;
`;

const VScrollBtn = styled.div`
  height: 15px;
  flex: none;
  background: #f0f0f0;
  display: flex;
  align-items: center;
  justify-content: center;
`;

const VThumb = styled.div`
  height: 170px;
  flex: none;
  background: #fafafa;
  border-bottom: 1px solid #d8d8d8;
`;

const VTrack = styled.div`
  flex: 1;
`;

const HelpPane = styled.div`
  width: 290px;
  height: 327px;
  flex: none;
  background: #fff;
  border: 1px solid #e0e0e0;
`;

const InfoRow = styled.div`
  flex: none;
  padding: 44px 0 0 21px;
  display: flex;
  align-items: flex-start;
`;

const InfoIconBox = styled.div`
  width: 78px;
  flex: none;
`;

const InfoText = styled.div`
  font-size: 11.7px;
  line-height: 16px;
  padding-top: 4px;
  color: #222;
  width: 700px;
`;

const ButtonRow = styled.div`
  margin-top: auto;
  margin-bottom: 3px;
  padding-right: 13px;
  display: flex;
  justify-content: flex-end;
  gap: 6px;
`;

const DlgBtn = styled.div<{ $off?: boolean }>`
  width: 90px;
  height: 25px;
  border: 1px solid ${(p) => (p.$off ? "#d0d0d0" : "#adadad")};
  border-radius: 3px;
  background: ${(p) => (p.$off ? "#ececec" : "#f2f2f2")};
  color: ${(p) => (p.$off ? "#9a9a9a" : "#111")};
  text-align: center;
  line-height: 23px;
  ${narrow}
`;

/* ---------- small drawings ---------- */

const LineX = ({ c = "#777", s = 14 }: { c?: string; s?: number }) => (
  <IconSvg $s={s} viewBox="0 0 14 14" fill="none">
    <path d="M1 1l12 12M13 1L1 13" stroke={c} strokeWidth="1" />
  </IconSvg>
);

const LineMin = () => (
  <IconSvg $s={13} viewBox="0 0 13 13" fill="none">
    <path d="M1 7h11" stroke="#999" />
  </IconSvg>
);

const LineMax = () => (
  <IconSvg $s={13} viewBox="0 0 13 13" fill="none">
    <rect x="1" y="1" width="11" height="11" stroke="#999" />
  </IconSvg>
);

const LineRestore = () => (
  <IconSvg $s={13} viewBox="0 0 13 13" fill="none">
    <rect x="1" y="3" width="9" height="9" stroke="#999" />
    <path d="M3 3V1h9v9h-2" stroke="#999" />
  </IconSvg>
);

const Magnifier = ({ c = "#888", s = 15 }: { c?: string; s?: number }) => (
  <IconSvg $s={s} viewBox="0 0 16 16" fill="none">
    <circle cx="6.500" cy="6.500" r="5" stroke={c} strokeWidth="1.300" />
    <path d="M10 10l5 5" stroke={c} strokeWidth="1.600" />
  </IconSvg>
);

const InfoBalloon = () => (
  <IconSvg $s={36} viewBox="0 0 36 36" fill="none">
    <path
      d="M18 1C9 1 2 7 2 15c0 7 5 12 12 13l7 7v-7c7-1 13-6 13-13C34 7 27 1 18 1z"
      fill="#fff"
      stroke="#777"
      strokeWidth="1.500"
    />
    <path d="M33 16c0 6-5 11-12 12v6" stroke="#444" strokeWidth="2" />
    <circle cx="17" cy="7.500" r="2.600" fill="#0a1bd8" />
    <path d="M13 13h6v9h2.500v2h-9v-2H15v-7h-2z" fill="#0a1bd8" />
  </IconSvg>
);

const TrackMap = () => (
  <MapSvg viewBox="335 257 1094 470" preserveAspectRatio="none">
    <rect x="335" y="257" width="1094" height="470" fill="#f2efe9" />
    <path d="M1327 283l56-26h16l-60 36z" fill="#d9d0c9" />
    <path d="M1330 300l62-43 18 16-63 47z" fill="#87dcb6" />
    <path d="M1363 278l14 19" stroke="#73cfa5" />
    <path d="M1410 257h19v18z" fill="#cdebd0" />
    <path d="M1349 322l60-40 20 24v6l-52 51z" fill="#dcebe9" stroke="#a8dcc8" />
    <path d="M1429 365l-66 45-10 13-1 14 11 26 34 20 32-13z" fill="#87dcb6" />
    <path
      d="M1429 352l-76 51-16 27-2 13 18 35 54 25 22-13"
      fill="none"
      stroke="#fa9c9c"
      strokeWidth="1.200"
      strokeDasharray="2 2"
    />
    <path d="M1300 320l12-4 40 50-30 20-22-30zM1300 340l22-8" fill="none" stroke="#cfc8c0" />
    <path d="M1313 313l10-6 38 55-11 6z" fill="#d9d0c9" />
    <path d="M1337 383l20-16 9 11-23 19-12 8 8 14-12 14-27-28v-22l10 8z" fill="#d9d0c9" />
    <path d="M1300 440l87 115 42-28v91l-129 12z" fill="#dedcce" />
    <path d="M1300 440l87 115 42-28" fill="none" stroke="#fff" strokeWidth="4" />
    <path d="M1300 436l50 66" fill="none" stroke="#bfbcb5" />
    <path d="M1352 497l11-8 30 34 24-18 10 12-40 31z" fill="#d9d0c9" />
    <path d="M1300 497l17-10 10 13-27 5zM1300 517l50-13 5 5-55 16zM1300 537l55-14 5 6-60 21z" fill="#d9d0c9" />
    <path d="M1300 532l47-15M1300 557l63-18" stroke="#fff" strokeWidth="3" />
    <path d="M1305 563l70-18 3 11-68 21zM1302 602l108-18 3 18-109 19zM1398 563l31-22v17l-19 17z" fill="#d9d0c9" />
    <path d="M1155 660h274v67h-274z" fill="#ebd9e8" />
    <path d="M1300 630l129-12v42h-129z" fill="#ebd9e8" />
    <path d="M1300 630l129-12" stroke="#c9bdc6" />
    <path d="M1155 663l53-1 6 33-59 5zM1226 667l37-5 1 9-35 6zM1282 693l70-7 8 41h-75zM1239 702l21-3 5 28h-18zM1179 722l24-3v8h-24zM1402 636l10-2 1 7-10 2z" fill="#d9d0c9" />
    <path d="M1155 716l65-8 13-16 27-15 30-9 63-2 13 51" fill="none" stroke="#fff" strokeWidth="3" />
    <path d="M1429 647l-11 2 2 31h9" fill="none" stroke="#fff" strokeWidth="3" />
    <path
      d="M1356 389l-9 9-7 15-3 13-7 5v12l5 16 4 20-13 17 34 30 6 17-17 3-27 10-13-2-9-2"
      fill="none"
      stroke="#8e5ea2"
      strokeWidth="1.300"
    />
    <path
      d="M1347 403l-12 30 14 48-6 15 17 30-10 14-37 13"
      fill="none"
      stroke="#8e5ea2"
      strokeWidth="1.300"
    />
    <path d="M1341 397l6-2 5 2-3 5-5-2z" fill="#8e5ea2" />
    <text x="1318" y="366" fontSize="8" fontFamily={FONT} fill="#666" transform="rotate(52 1318 366)">
      Спортивный
    </text>
    <text x="1322" y="387" fontSize="8" fontFamily={FONT} fill="#666" transform="rotate(52 1322 387)">
      клуб
    </text>
    <text x="1401" y="513" fontSize="8" fontFamily={FONT} fill="#666" transform="rotate(60 1401 513)">
      1 с3
    </text>
  </MapSvg>
);

/* ---------- data ---------- */

const FUNC_FIELDS = ["feature", "geometry", "id", "row_number"];
const FUNC_GROUPS = [
  "Агрегатные функ...",
  "Геометрия",
  "Дата и время",
  "Записи и атрибуты",
  "Массивы",
  "Недавние (fieldcalc)",
  "Нечёткие соответ...",
  "Общие",
  "Операторы",
  "Переменные",
  "Поля и значения",
  "Преобразования",
  "Растры",
];
const OPERATORS = ["=", "+", "-", "/", "*", "^", "||", "(", ")", "'\\n'"];
const MENUS = ["Проект", "Правка", "Вид", "Слой", "Настройки", "Модули"];

const RAIL: { n: string; caret?: boolean }[] = [
  { n: "pencilsOff", caret: true },
  { n: "pencil" },
  { n: "saveOff" },
  { n: "lineOff", caret: true },
  { n: "vOff" },
  { n: "toolsOff", caret: true },
  { n: "rowsOff" },
  { n: "trashOff" },
  { n: "scissorsOff" },
  { n: "copyOff" },
  { n: "pasteOff" },
  { n: "undoOff" },
  { n: "redoOff" },
];

export default function App() {
  return (
    <Desktop>
      <GlobalStyle />
      <TitleBar>
        <QLogo s={19} />
        lyznik — QGIS
        <WinButtons>
          <WinBtn>
            <LineMin />
          </WinBtn>
          <WinBtn>
            <LineRestore />
          </WinBtn>
          <WinBtn>
            <LineX c="#999" />
          </WinBtn>
        </WinButtons>
      </TitleBar>
      <MenuBar>
        {MENUS.map((m) => (
          <span key={m}>{m}</span>
        ))}
      </MenuBar>

      <ToolRow $h={44}>
        <ToolGroup>
          <Grip $mx={5} />
          {["doc", "folder", "save", "props", "wrench", "style"].map((n) => (
            <Tool key={n}>
              <Icon n={n} />
            </Tool>
          ))}
          <Grip $mx={7} />
          <Tool $w={36} $on>
            <Icon n="hand" />
          </Tool>
          <Tool>
            <Icon n="pan" />
          </Tool>
        </ToolGroup>
        <ToolGroup>
          <Tool $w={32}>
            <Icon n="gear" />
          </Tool>
          <Tool $w={40}>
            <Icon n="sigma" />
          </Tool>
          <Tool $w={34}>
            <Icon n="table" />
          </Tool>
          <Caret $mx={3} />
          <Tool $w={36}>
            <Icon n="ruler" />
          </Tool>
          <Caret $mx={1} />
          <Tool $w={42}>
            <Icon n="tip" />
          </Tool>
          <Tool $w={34}>
            <Icon n="gearOff" />
          </Tool>
          <Caret $c="#aaa" $mx={2} />
          <Grip $mx={6} />
        </ToolGroup>
      </ToolRow>
      <ToolRow $h={43}>
        <ToolGroup>
          <Grip $mx={5} />
          {["layers", "box", "vedit", "feather", "chip", "grid", "vbox"].map((n) => (
            <Tool key={n}>
              <Icon n={n} />
            </Tool>
          ))}
        </ToolGroup>
        <ToolGroup>
          <Tool>
            <Icon n="globeAdd" />
          </Tool>
          <Tool>
            <Icon n="globeFind" />
          </Tool>
          <Tool>
            <Icon n="globeBin" />
          </Tool>
          <Grip $mx={9} />
          <Tool $w={30}>
            <Icon n="python" />
          </Tool>
          <Grip $mx={11.5} />
          <Tool $w={28}>
            <Icon n="help" />
          </Tool>
          <Grip $mx={12} />
          <Tool $w={5} />
        </ToolGroup>
      </ToolRow>
      <ToolRow $h={43}>
        <ToolGroup>
          <Grip $mx={5} />
          <Tool>
            <Icon n="triangle" />
          </Tool>
          <Tool>
            <Icon n="vmove" />
          </Tool>
          <Caret $mx={3} $c="#aaa" />
          <Tool>
            <Icon n="blobRot" />
          </Tool>
          <Tool>
            <Icon n="blobMove" />
          </Tool>
          <Tool>
            <Icon n="hexa" />
          </Tool>
          <Tool>
            <Icon n="blobHole" />
          </Tool>
          <Tool>
            <Icon n="blobPart" />
          </Tool>
          <Tool>
            <Icon n="blobHole" />
          </Tool>
        </ToolGroup>
      </ToolRow>
      <ToolRow $h={44}>
        <ToolGroup>
          <Grip $mx={5} />
          <Tool>
            <Icon n="arc" />
          </Tool>
          <Tool>
            <Icon n="ring" />
          </Tool>
          <Caret $mx={3} $c="#888" />
          <Tool>
            <Icon n="blobRot" />
          </Tool>
        </ToolGroup>
      </ToolRow>

      <Body>
        <Rail>
          <RailGrip />
          {RAIL.map((r, i) => (
            <RailSlot key={i}>
              <Icon n={r.n} />
              {r.caret && (
                <RailCaret>
                  <Caret $c="#aaa" />
                </RailCaret>
              )}
            </RailSlot>
          ))}
        </Rail>
        <Docks>
          <DockTitle>Браузер</DockTitle>
          <DockTools>
            <Icon n="addGroup" s={18} />
            <Icon n="refresh" s={18} />
            <Icon n="filter" s={18} />
          </DockTools>
          <TreeBox $h={127}>
            <TreeRow>
              <Arrow $w={21} />
              <Icon n="star" s={19} />
              <BrowserLabel>Избранное</BrowserLabel>
            </TreeRow>
            <TreeRow>
              <Arrow $w={21}>
                <RightTri />
              </Arrow>
              <Icon n="project" s={19} />
              <BrowserLabel>Пространственные закладки</BrowserLabel>
            </TreeRow>
            <TreeRow>
              <Arrow $w={21}>
                <RightTri />
              </Arrow>
              <Icon n="home1" s={19} />
              <BrowserLabel>Домашняя</BrowserLabel>
            </TreeRow>
            <TreeRow>
              <Arrow $w={21}>
                <RightTri />
              </Arrow>
              <Icon n="home2" s={19} />
              <BrowserLabel>Домашняя</BrowserLabel>
            </TreeRow>
            <TreeRow>
              <Arrow $w={21}>
                <RightTri />
              </Arrow>
              <Icon n="driveFolder" s={19} />
              <BrowserLabel>C:\ (Windows)</BrowserLabel>
            </TreeRow>
            <TreeRow>
              <Arrow $w={21} />
              <Icon n="geopackage" s={19} />
              <BrowserLabel>GeoPackage</BrowserLabel>
            </TreeRow>
            <TreeRow>
              <Arrow $w={21} />
              <Icon n="vbox" s={19} />
            </TreeRow>
          </TreeBox>
          <DockTitle $mt={9}>Слои</DockTitle>
          <DockTools>
            <Icon n="brush" s={18} />
            <Icon n="layerAdd" s={18} />
            <Icon n="eye" s={18} />
          </DockTools>
          <TreeBox>
            <TreeRow>
              <Arrow $w={26} />
              <Check />
              <LayerSym>
                <SymDot />
              </LayerSym>
              <TreeLabel $i $gray $ml={7}>
                2025
              </TreeLabel>
            </TreeRow>
            <TreeRow>
              <Arrow $w={26} />
              <Check />
              <LayerSym>
                <SymLine $c="#b08b78" />
              </LayerSym>
              <TreeLabel $i $gray $ml={7}>
                2025
              </TreeLabel>
            </TreeRow>
            <TreeRow $sel>
              <Arrow $w={26} />
              <Check>
                <Tick />
              </Check>
              <LayerSym>
                <SymLine $c="#f29a3c" />
              </LayerSym>
              <TreeLabel $b $u $ml={7}>
                Разность
              </TreeLabel>
            </TreeRow>
            <TreeRow>
              <Arrow $w={26} />
              <Check>
                <Tick />
              </Check>
              <LayerSym>
                <SymLine $c="#8e6aa8" />
              </LayerSym>
              <TreeLabel $b $ml={7}>
                Разность
              </TreeLabel>
            </TreeRow>
            <TreeRow>
              <Arrow $w={26} />
              <Check />
              <LayerSym>
                <SymFill />
              </LayerSym>
              <TreeLabel $i $gray $ml={7}>
                полигон
              </TreeLabel>
            </TreeRow>
            <TreeRow>
              <Arrow $w={26}>
                <Caret />
              </Arrow>
              <Check>
                <Tick />
              </Check>
              <LayerSym>
                <Icon n="checker" s={16} />
              </LayerSym>
              <TreeLabel $b $ml={7}>
                OpenStreetMap
              </TreeLabel>
            </TreeRow>
          </TreeBox>
        </Docks>
        <MapColumn>
          <MessageBar>
            <MessageBtn>обновления...</MessageBtn>
            <IconSvg $s={20} viewBox="0 0 20 20" fill="none">
              <circle cx="10" cy="10" r="9.500" fill="#2c2c2c" />
              <path d="M6 6l8 8M14 6l-8 8" stroke="#fff" strokeWidth="2.400" />
            </IconSvg>
          </MessageBar>
          <TrackMap />
        </MapColumn>
      </Body>

      <StatusBar>
        <SearchBox>
          <Magnifier />
          Искать (Ctrl+K)
        </SearchBox>
        <StatusRight>
          <ScaleSpin>
            <SpinArrows>
              <Up />
              <Down />
            </SpinArrows>
          </ScaleSpin>
          <Check>
            <Tick />
          </Check>
          <StatusText $ml={5}>Отрисовка</StatusText>
          <StatusIcon $ml={18}>
            <Icon n="epsg" s={17} />
          </StatusIcon>
          <StatusText $ml={3}>EPSG:3576</StatusText>
          <StatusIcon $ml={25}>
            <Icon n="bubble" s={19} />
          </StatusIcon>
        </StatusRight>
      </StatusBar>

      <Taskbar>
        <TaskSlot $w={52}>
          <IconSvg $s={19} viewBox="0 0 19 19">
            <path d="M0 2.500l8-1.200v7.500H0zM9 1.200L19 0v8.800H9zM0 10h8v7.500L0 16.500zM9 10h10v9L9 17.800z" fill="#fff" />
          </IconSvg>
        </TaskSlot>
        <TaskSlot>
          <IconSvg $s={25} viewBox="0 0 25 25" fill="none">
            <circle cx="14.500" cy="10" r="8.200" stroke="#fff" strokeWidth="2.200" />
            <path d="M9 16.500L2 24" stroke="#fff" strokeWidth="2.600" />
          </IconSvg>
        </TaskSlot>
        <TaskSlot>
          <IconSvg $s={26} viewBox="0 0 26 26">
            <path d="M3 6l18-4 3 2v14l-18 3z" fill="#c9ced1" />
            <path d="M6 8l15-3v11L6 18z" fill="#f0f6fb" />
            <path d="M7 14l3-1 1 3 2-8 2 7 2-3 3 1" fill="none" stroke="#5ea8e0" />
            <path d="M8 21l10-2 2 4-11 2z" fill="#8a8f92" />
          </IconSvg>
        </TaskSlot>
        <TaskSlot>
          <IconSvg $s={28} viewBox="0 0 28 28">
            <rect width="28" height="28" rx="13" fill="#0e5ce6" />
            <text x="14" y="17" fontSize="8" fontFamily={FONT} fill="#fff" textAnchor="middle">
              zoom
            </text>
          </IconSvg>
        </TaskSlot>
        <TaskSlot>
          <IconSvg $s={26} viewBox="0 0 26 26">
            <path d="M3 4l15-3h5v22l-5 2-15-3z" fill="#a8355f" />
            <circle cx="15" cy="9" r="4" fill="#fff" />
            <path d="M13 11l-7 8 3 2 6-8z" fill="#fff" />
          </IconSvg>
        </TaskSlot>
        <TaskSlot>
          <IconSvg $s={26} viewBox="0 0 26 26">
            <path d="M1 4l13-3 11 3v20l-11 1-13-3z" fill="#e9592a" />
            <rect x="13" y="5" width="12" height="18" fill="#f6f3ee" />
            <circle cx="19" cy="14" r="3.500" fill="#e9592a" />
            <path d="M5 9h6v9H5z" fill="none" stroke="#fff" strokeWidth="2" />
          </IconSvg>
        </TaskSlot>
        <TaskSlot $open>
          <IconSvg $s={26} viewBox="0 0 26 26">
            <path d="M1 4l14-3 10 3v20l-10 1-14-3z" fill="#2b5ea8" />
            <rect x="13" y="5" width="12" height="18" fill="#f1f4f8" />
            <path d="M15 8h8M15 11h8M15 14h8M15 17h8M15 20h8" stroke="#6d93c4" />
            <text x="3" y="18" fontSize="13" fontFamily={FONT} fontWeight="700" fill="#fff">
              W
            </text>
          </IconSvg>
        </TaskSlot>
        <TaskSlot>
          <IconSvg $s={24} viewBox="0 0 24 24">
            <rect width="24" height="24" rx="2" fill="#2f0a02" />
            <text x="12" y="17" fontSize="13" fontFamily={FONT} fontWeight="700" fill="#f59a1c" textAnchor="middle">
              Ai
            </text>
          </IconSvg>
        </TaskSlot>
        <TaskSlot>
          <IconSvg $s={24} viewBox="0 0 24 24">
            <rect x="1" y="1" width="22" height="22" fill="#041a2c" stroke="#16a9e8" strokeWidth="2" />
            <text x="12" y="17" fontSize="13" fontFamily={FONT} fill="#2cb5f2" textAnchor="middle">
              Ps
            </text>
          </IconSvg>
        </TaskSlot>
        <TaskSlot $open>
          <IconSvg $s={29} viewBox="0 0 29 29">
            <circle cx="14" cy="14" r="13" fill="#e1483c" />
            <path d="M14 14L3 22a13 13 0 0 1-2-8z" fill="#3aa757" />
            <path d="M14 14l13 2a13 13 0 0 1-16 11z" fill="#f8c436" />
            <circle cx="14" cy="14" r="6" fill="#4a8cf0" stroke="#fff" strokeWidth="1.500" />
            <circle cx="20" cy="21" r="7.500" fill="#7a6552" />
          </IconSvg>
        </TaskSlot>
        <TaskSlot $open>
          <IconSvg $s={26} viewBox="0 0 26 26">
            <path d="M2 3h9l2 3h11v5H2z" fill="#e9b93c" />
            <rect x="2" y="9" width="22" height="15" fill="#fbd75b" />
            <rect x="8" y="16" width="10" height="8" fill="#3f8ed8" />
          </IconSvg>
        </TaskSlot>
        <TaskSlot $open>
          <IconSvg $s={32} viewBox="0 0 32 32">
            <circle cx="14" cy="14" r="12.500" fill="#2fa3dd" />
            <path d="M6 14l15-6-2.500 13-4.500-3-2 3-1-5z" fill="#fff" />
            <rect x="14" y="18" width="18" height="13" rx="4" fill="#e0413c" />
            <text x="23" y="28" fontSize="10" fontFamily={FONT} fill="#fff" textAnchor="middle">
              .14
            </text>
          </IconSvg>
        </TaskSlot>
        <TaskSlot $active>
          <QLogo s={28} />
        </TaskSlot>
        <TrayGroup>
          <TaskSlot $w={34}>
            <IconSvg $s={14} viewBox="0 0 14 14" fill="none">
              <path d="M1 10l6-6 6 6" stroke="#ddd" />
            </IconSvg>
          </TaskSlot>
          <TaskSlot $w={35}>
            <IconSvg $s={16} viewBox="0 0 16 16" fill="none">
              <rect x="4" y="1" width="8" height="11" rx="1.500" stroke="#ddd" />
              <circle cx="8" cy="6" r="1.500" stroke="#ddd" />
              <path d="M6 15h4M1 5v6" stroke="#ddd" />
            </IconSvg>
          </TaskSlot>
          <TaskSlot $w={37}>
            <IconSvg $s={18} viewBox="0 0 18 18" fill="none">
              <rect x="1" y="5" width="15" height="8" stroke="#ddd" />
              <rect x="2.500" y="6.500" width="9" height="5" fill="#fff" />
              <path d="M17 8v2" stroke="#ddd" />
            </IconSvg>
          </TaskSlot>
          <TaskSlot $w={35}>
            <IconSvg $s={18} viewBox="0 0 18 18" fill="none">
              <path d="M1 6h3l4-4v14l-4-4H1z" stroke="#ddd" />
              <path d="M11 6c1 2 1 4 0 6M14 4c2 3 2 7 0 10" stroke="#888" />
            </IconSvg>
          </TaskSlot>
          <TaskSlot $w={37}>
            <IconSvg $s={18} viewBox="0 0 18 18" fill="none">
              <path d="M1 16C2 9 8 3 16 2M5 16c1-4 4-7 9-9M9 16c1-2 2-3 5-4" stroke="#ccc" />
              <circle cx="14" cy="16" r="1" fill="#ddd" />
            </IconSvg>
          </TaskSlot>
          <TaskSlot $w={38}>
            <TrayEng>ENG</TrayEng>
          </TaskSlot>
          <Clock>
            23:47
            <br />
            06.04.2025
          </Clock>
          <TaskSlot $w={46}>
            <IconSvg $s={20} viewBox="0 0 20 20">
              <path d="M1 2h18v13h-6l-3 3-3-3H1z" fill="#f5f5f5" />
              <path d="M4 6h12M4 9h12M4 12h8" stroke="#333" />
            </IconSvg>
          </TaskSlot>
          <ShowDesktop />
        </TrayGroup>
      </Taskbar>

      <AttrWindow>
        <AttrTitle>
          <QLogo s={18} />
          Разность — объектов всего: 1
          <WinButtons>
            <WinBtn>
              <LineMin />
            </WinBtn>
            <WinBtn>
              <LineMax />
            </WinBtn>
            <WinBtn $w={54}>
              <LineX c="#999" s={13} />
            </WinBtn>
          </WinButtons>
        </AttrTitle>
        <AttrTools>
          <AttrTool>
            <Icon n="editOn" s={20} />
          </AttrTool>
          <AttrTool>
            <Icon n="formEdit" s={18} />
          </AttrTool>
          <AttrTool>
            <Icon n="saveOff" s={18} />
          </AttrTool>
          <VSep />
          <AttrTool>
            <Icon n="addRow" s={18} />
          </AttrTool>
          <AttrTool>
            <Icon n="trashOff" s={18} />
          </AttrTool>
          <AttrTool>
            <Icon n="scissorsOff" s={18} />
          </AttrTool>
          <AttrTool>
            <Icon n="copyOff" s={18} />
          </AttrTool>
        </AttrTools>
        <HeaderRow>
          <HeadCell $w={13} />
          <HeadCell $w={110}>name</HeadCell>
          <HeadCell $w={112}>cmt</HeadCell>
          <HeadCell />
          <HeadCell $w={112}>link2_type</HeadCell>
          <HeadCell $w={27} />
        </HeaderRow>
        <DataRow>
          <RowHead>1</RowHead>
          <DataCell $w={110}>NULL</DataCell>
          <DataCell $w={112}>NULL</DataCell>
          <DataCell />
          <DataCell $w={112}>NULL</DataCell>
          <DataCell $w={27} />
        </DataRow>
        <EmptyArea>
          <Gutter />
        </EmptyArea>
        <HScroll>
          <ScrollBtn>
            <LeftTri />
          </ScrollBtn>
          <ScrollBtn>
            <RightTri />
          </ScrollBtn>
        </HScroll>
        <AttrFooter>
          <AllButton>
            <Icon n="table" s={15} />
            Все объекты
            <AllCaret>
              <Caret $c="#666" />
            </AllCaret>
          </AllButton>
          <ToolGroup>
            <ViewToggle>
              <Icon n="viewForm" s={16} />
            </ViewToggle>
            <ViewToggle $on>
              <Icon n="table" s={17} />
            </ViewToggle>
          </ToolGroup>
        </AttrFooter>
      </AttrWindow>

      <Dialog>
        <DialogTitle>
          <QLogo s={19} />
          Разность — калькулятор полей
          <CloseX>
            <LineX c="#444" s={13} />
          </CloseX>
        </DialogTitle>
        <TopPart>
          <CheckLine>
            <Check $off />
            <CheckText $off>Обновить только 0 выбранных объектов</CheckText>
          </CheckLine>
          <ChoiceGrid>
            <div>
              <GroupHead>
                <CheckLine $mt={12}>
                  <Check>
                    <Tick />
                  </Check>
                  <CheckText $b>Создать новое поле</CheckText>
                </CheckLine>
              </GroupHead>
              <GroupBox>
                <CheckLine>
                  <Check />
                  <CheckText>Создать виртуальное поле</CheckText>
                </CheckLine>
                <FieldRow $mt={6}>
                  <FieldLabel>Имя поля</FieldLabel>
                  <TextInput />
                </FieldRow>
                <FieldRow $mt={4}>
                  <FieldLabel>Тип</FieldLabel>
                  <Combo $w={257}>
                    <ComboText>
                      <Code123>123</Code123>
                      Целое число (integer)
                    </ComboText>
                    <Caret $c="#444" />
                  </Combo>
                </FieldRow>
                <FieldRow $mt={5}>
                  <FieldLabel>Размер</FieldLabel>
                  <SpinBox>
                    <SpinValue>10</SpinValue>
                    <SpinArrows>
                      <Up />
                      <Down />
                    </SpinArrows>
                  </SpinBox>
                  <FieldLabel $w={95} $pl={7}>
                    Точность
                  </FieldLabel>
                  <SpinBox $off>
                    <SpinValue>3</SpinValue>
                    <SpinArrows $off>
                      <Up $off />
                      <Down $c="#aaa" />
                    </SpinArrows>
                  </SpinBox>
                </FieldRow>
              </GroupBox>
            </div>
            <div>
              <GroupHead>
                <CheckLine $mt={12}>
                  <Check />
                  <CheckText $b>Обновить существующее поле</CheckText>
                </CheckLine>
              </GroupHead>
              <GroupBoxRight>
                <Combo $h={26}>
                  <span />
                  <Caret $c="#aaa" />
                </Combo>
              </GroupBoxRight>
            </div>
          </ChoiceGrid>
        </TopPart>
        <TabBar>
          <Tab $on $w={92}>
            Выражение
          </Tab>
          <Tab $w={131}>Редактор функций</Tab>
        </TabBar>
        <Workspace>
          <LeftPane>
            <IconBtns>
              <IconBtn $off>
                <Icon n="docFaint" s={17} />
              </IconBtn>
              <IconBtn $off>
                <Icon n="saveFaint" s={17} />
              </IconBtn>
              <IconBtn $off>
                <Icon n="editFaint" s={17} />
              </IconBtn>
              <IconBtn $off>
                <Icon n="trashFaint" s={17} />
              </IconBtn>
              <IconBtn>
                <Icon n="download" s={19} />
              </IconBtn>
              <IconBtn>
                <Icon n="upload" s={19} />
              </IconBtn>
            </IconBtns>
            <Editor>
              <CurrentLine />
            </Editor>
            <OpRow>
              {OPERATORS.map((o) => (
                <OpBtn key={o}>{o}</OpBtn>
              ))}
            </OpRow>
            <ObjectRow>
              <ObjectLabel>Объект</ObjectLabel>
              <ObjectCombo>
                <ObjectDrop>
                  <Caret $c="#666" />
                </ObjectDrop>
              </ObjectCombo>
              <NavBtn $ml={7}>
                <LeftTri $c="#cfcfcf" $big />
              </NavBtn>
              <NavBtn $ml={6}>
                <RightTri $c="#cfcfcf" $big />
              </NavBtn>
            </ObjectRow>
            <PreviewLabel>Просмотр:</PreviewLabel>
          </LeftPane>
          <Splitter $w={25}>
            <SplitDots />
          </Splitter>
          <MiddlePane>
            <SearchRow>
              <MiniSearch>
                <Magnifier s={14} />
                Пои...
              </MiniSearch>
              <HelpBtn>Справка</HelpBtn>
            </SearchRow>
            <FuncTree>
              <FuncList>
                {FUNC_FIELDS.map((f) => (
                  <FuncRow key={f}>
                    <FuncArrow />
                    <FuncName>{f}</FuncName>
                  </FuncRow>
                ))}
                {FUNC_GROUPS.map((g) => (
                  <FuncRow key={g}>
                    <FuncArrow>
                      <RightTri $c="#666" />
                    </FuncArrow>
                    <FuncName $group>{g}</FuncName>
                  </FuncRow>
                ))}
              </FuncList>
              <VScroll>
                <VScrollBtn>
                  <Up />
                </VScrollBtn>
                <VThumb />
                <VTrack />
                <VScrollBtn>
                  <Down />
                </VScrollBtn>
              </VScroll>
            </FuncTree>
          </MiddlePane>
          <Splitter $w={16} $pl={2}>
            <SplitDots />
          </Splitter>
          <HelpPane />
        </Workspace>
        <InfoRow>
          <InfoIconBox>
            <InfoBalloon />
          </InfoIconBox>
          <InfoText>
            Вы редактируете информацию в слое, который не находится в режиме редактирования. При нажатии кнопки ОК режим
            редактирования включится автоматически.
          </InfoText>
        </InfoRow>
        <ButtonRow>
          <DlgBtn $off>OK</DlgBtn>
          <DlgBtn>Отмена</DlgBtn>
          <DlgBtn $off>Применить</DlgBtn>
          <DlgBtn>Справка</DlgBtn>
        </ButtonRow>
      </Dialog>
    </Desktop>
  );
}
